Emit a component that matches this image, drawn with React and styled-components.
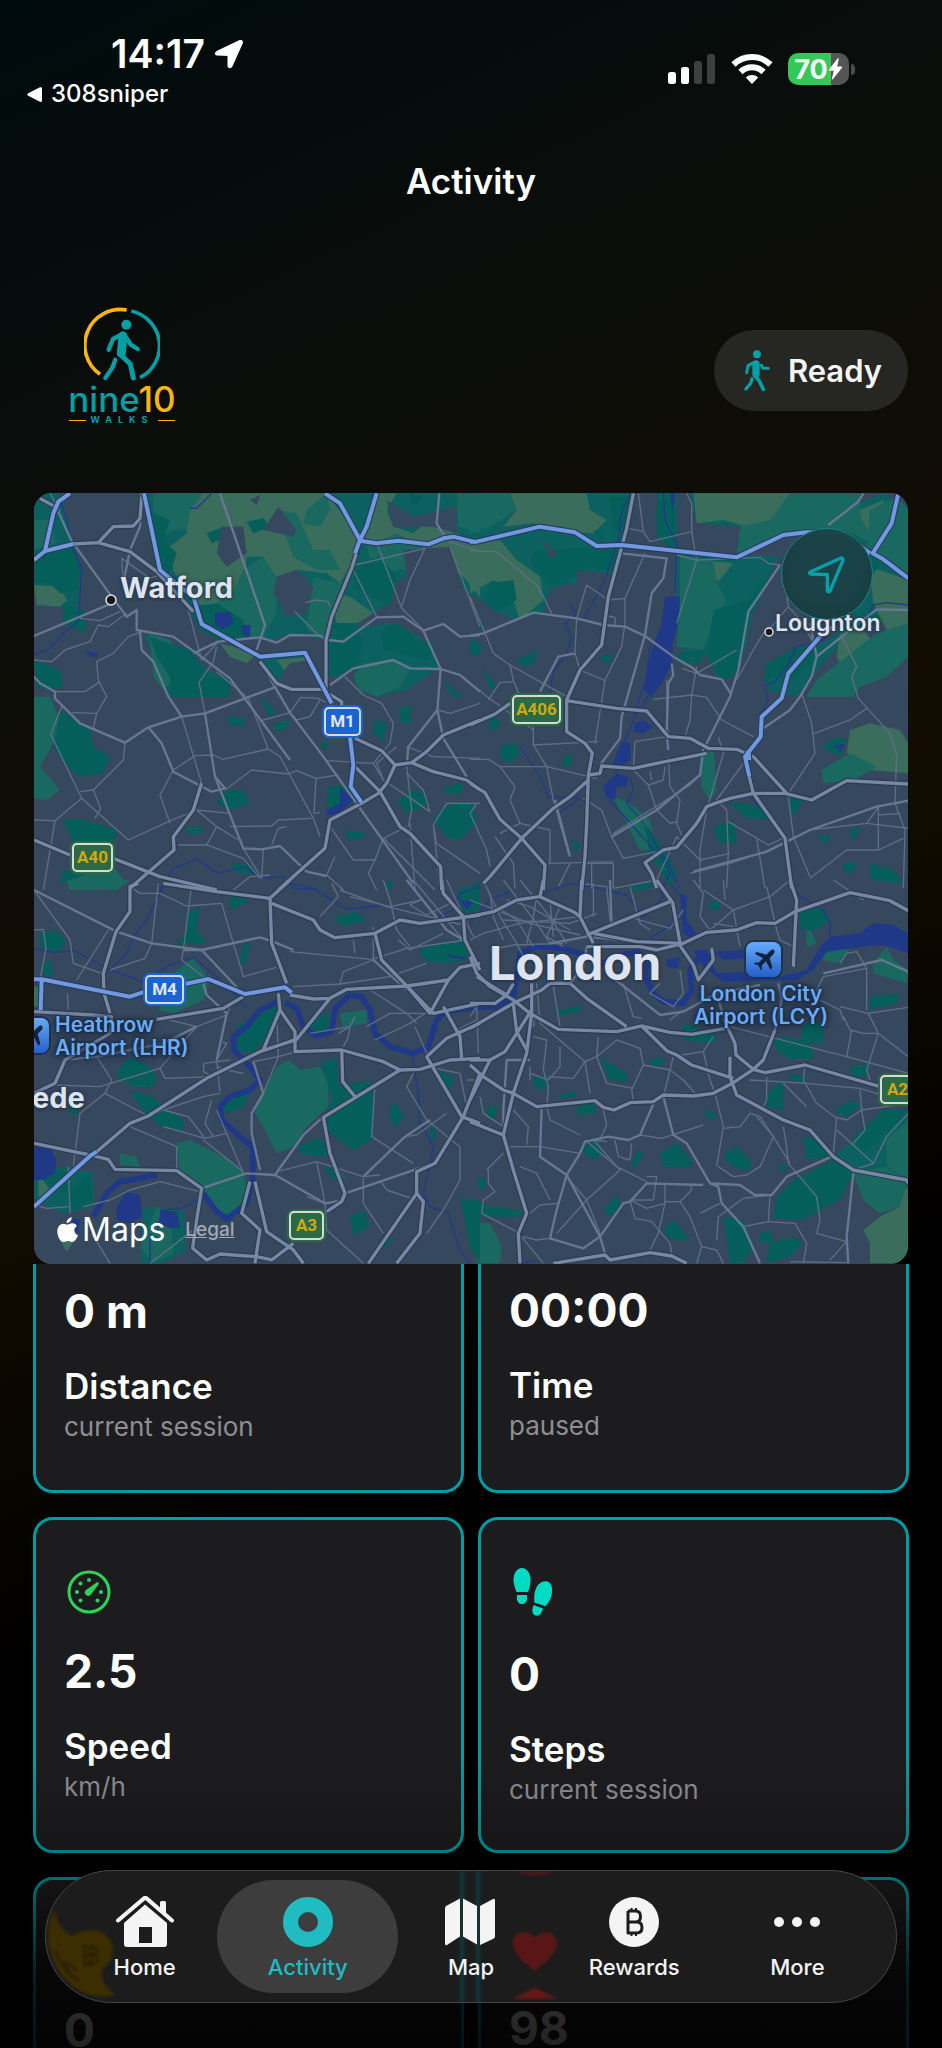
import { useLayoutEffect, useRef } from "react";
import styled, { createGlobalStyle } from "styled-components";

// Map geometry is split in four tiles, three units to a pixel.
const tiles = [
  {
    x: -4,
    y: -3,
    wood: [
      "350,10 1350,10 1350,400 1290,340 1200,300 1110,260 1060,350 960,400 940,560 890,560 880,450 800,430 720,450 640,450 570,450 500,390 430,300 385,240 350,100",
      "12,10 90,10 130,160 155,235 145,350 60,350 12,280",
      "690,500 830,495 860,560 800,560 760,560 730,590",
      "960,410 1100,400 1210,470 1230,530 1130,600 1040,620 980,580",
      "340,430 480,490 540,545 600,570 600,620 420,620 380,520",
    ],
    olive: [
      "480,10 890,10 985,140 960,230 930,280 890,250 800,240 735,262 700,200 650,200 640,300 600,340 520,375 470,310 430,240 420,170 470,130",
      "1040,10 1100,10 1070,60 1090,110 1150,130 1210,80 1280,130 1350,160 1350,320 1290,250 1180,280 1100,220 1020,200 1000,120",
      "12,285 90,290 110,330 90,350 20,345",
      "900,310 960,320 1030,370 980,400 920,400",
      "570,460 680,490 650,520 600,500",
      "740,510 830,500 820,540 770,550",
    ],
    teal: [
      "830,60 890,10 900,60 870,110 820,100",
      "640,240 700,200 740,262 740,370 700,440 640,440 600,380 560,340 610,300",
      "1010,170 1100,130 1180,170 1170,230 1100,240 1050,250",
      "970,560 1000,520 1100,510 1135,545 1110,590 1040,620 990,600",
      "740,60 800,70 850,180 900,180 930,240 860,240 790,200",
      "360,430 420,450 460,510 440,560 400,600 370,560",
      "12,620 60,620 90,690 70,760 30,830 90,900 50,930 12,925",
      "1280,10 1350,10 1350,130 1285,110",
      "100,1150 250,1130 280,1170 230,1200 120,1200",
      "370,10 520,10 480,60 470,120 420,120 370,180",
      "12,90 60,90 80,160 12,180",
      "850,260 930,280 950,240 900,380 880,440 830,420",
    ],
    park: [
      "350,60 420,90 400,150 440,190 420,250 380,230 360,150",
      "12,180 130,170 155,230 140,300 90,310 60,280 12,280",
      "470,350 560,340 640,390 650,450 570,450 510,420",
      "360,440 480,480 540,560 600,570 600,620 420,620 420,560 380,500",
      "90,660 180,720 190,770 240,800 220,850 150,860 110,830 70,770",
      "12,510 90,540 100,590 60,600 20,590",
      "100,990 160,990 260,1020 250,1060 130,1060",
      "100,340 160,360 170,430 100,400",
      "970,230 1050,200 1100,260 1080,350 1030,320 970,290",
      "1050,420 1100,400 1160,450 1210,460 1200,510 1140,500 1060,480",
      "890,400 980,400 1000,460 970,540 900,560",
      "1230,960 1270,940 1330,940 1340,1000 1290,1050 1250,1040 1210,990",
      "895,890 950,885 970,930 910,960 890,950",
      "590,900 640,900 660,940 600,960 560,940",
      "1110,650 1145,650 1140,700 1110,700",
      "1030,690 1070,700 1060,755 1030,730",
      "1100,930 1150,900 1185,910 1190,950 1130,970",
      "460,1010 520,1010 510,1030 480,1035",
      "590,680 645,685 640,710 600,705",
      "690,620 735,660 720,685",
      "870,750 900,765 880,780",
      "1235,570 1300,620 1270,620",
      "1140,10 1180,20 1150,50",
      "730,700 780,690 770,715 740,725",
      "950,1020 1005,1030 990,1050 950,1045",
      "1240,890 1300,880 1290,915 1250,910",
      "600,1120 650,1120 690,1150 620,1150",
      "100,1140 180,1150 90,1180",
      "530,130 580,110 570,150 545,160",
      "650,95 700,85 720,110 670,130",
    ],
    land: [
      "575,110 640,110 650,190 590,230 560,190",
      "700,120 745,50 800,120 790,140",
      "1070,30 1150,80 1280,50 1280,130 1210,110 1090,110",
      "740,260 800,240 850,290 830,370 770,380 730,310",
      "100,60 330,60 330,240 200,180",
      "770,250 830,260 840,300 780,300",
      "660,30 690,15 680,45",
      "1120,180 1260,170 1300,300 1350,330 1350,420 1180,430 1110,370 1130,260",
      "780,520 840,510 870,590 790,590 750,560",
    ],
    water: [
      "555,370 600,365 610,400 580,418 555,405",
      "635,405 662,405 658,445 635,430",
      "168,482 205,490 200,502 180,498",
      "930,890 970,930 920,975 890,975 890,960 930,940",
    ],
    river: [
      "90,30 110,90 125,165 155,235 145,395 100,430 60,475 12,495",
      "545,10 500,55 480,55",
      "390,1200 430,1135 500,1108 565,1150 645,1130 690,1165 760,1160 790,1195 860,1198",
    ],
    minor: [
      "150,385 210,392 270,365",
      "12,510 65,515 105,480 180,455 205,405 235,410 290,370",
      "335,425 295,440 250,490 200,515 205,570 230,620 200,670 125,668",
      "75,605 165,605 210,575",
      "95,650 62,732 155,925 295,1050 415,995 500,960 600,970",
      "12,990 75,992 155,925",
      "75,992 40,1200",
      "200,670 190,715 285,760 280,810 190,900 150,905",
      "190,900 212,955 195,985",
      "455,680 515,880",
      "430,840 495,797 550,795 578,808 715,777 655,625 560,545",
      "430,840 390,915 420,1000",
      "475,360 515,510 565,455 690,442",
      "560,470 550,515 507,578 525,670",
      "690,693 780,668 812,622 865,625 890,638",
      "715,777 750,800 850,985 870,1040",
      "585,900 665,840 775,852 800,842 858,865 925,855",
      "858,865 852,970 870,968",
      "600,1010 725,1008 745,990 845,985",
      "725,1065 745,1015 770,1010",
      "500,960 560,1010 625,1050",
      "560,1010 530,1065 445,1065",
      "530,1065 640,1105 690,1165",
      "640,1075 695,1165 700,1080",
      "900,1010 970,1110 1035,1110 1060,1045 1130,1010",
      "915,1100 890,1155 940,1200",
      "1035,1110 1015,1150 1040,1200",
      "1060,1045 1215,1200",
      "890,812 1030,820 1080,760 1090,700 1055,640 1000,615 945,560",
      "1130,770 1210,800 1350,805",
      "1030,820 1060,870 1200,965 1180,900 1130,850",
      "1210,1005 1250,940 1350,940",
      "1210,1005 1220,1060 1350,1150",
      "1225,660 1260,670 1350,640",
      "970,240 1040,380",
      "1040,160 1115,355 1180,420",
      "975,225 1185,175 1140,270 1115,350",
      "1255,155 1350,185",
      "1260,170 1350,410",
      "795,365 870,440",
      "825,338 860,330 895,335 900,350",
      "275,205 360,265 400,250",
      "275,205 280,280",
      "90,65 60,10",
      "1230,1200 1215,1050 1210,1005",
      "1130,830 1145,960 1135,1010",
      "1140,1000 1155,1200",
      "610,1200 660,1160 720,1155",
      "780,668 800,690 840,680 870,630",
      "1060,870 1040,820 1100,770",
    ],
    mid: [
      "130,160 245,320 290,380 320,360 320,420 430,440 500,490",
      "12,438 245,340",
      "85,65 130,165",
      "280,280 300,180 330,110 335,10",
      "330,425 335,480 370,515 415,620 455,680",
      "455,680 525,670 740,590",
      "12,560 30,580 75,605 75,625 150,700 285,758 355,712 455,680",
      "355,712 395,760 430,845 545,905 585,895 555,860",
      "525,670 555,860 640,1075 695,1078 750,1068 830,1145 890,1158",
      "500,490 600,565 780,810",
      "570,10 705,405 680,480",
      "490,490 565,455 690,442 740,458 780,435 870,437 895,450 940,455 1040,382 1120,380 1180,422 1240,402 1290,440 1350,435",
      "690,515 780,668 880,800 1150,1180",
      "1180,422 1232,537 1222,660 1135,770 1130,830",
      "1232,537 1290,555 1350,605",
      "1222,660 1240,745 1310,860",
      "900,585 970,535 1090,510 1140,535 1232,537",
      "1228,10 1220,100 1250,150",
    ],
    major: [
      "30,25 75,50",
      "130,162 205,158 300,185 380,245 490,365",
      "205,158 250,110 310,108 330,85 335,20",
      "690,515 740,580 785,598 875,598 935,635 935,660",
      "990,155 965,235 905,380 888,450 888,600",
      "12,1050 120,1095",
      "250,1105 390,1160 560,1200",
      "515,880 490,960 430,1040 432,1080 300,1195",
      "975,745 1055,782 1095,825 1070,880 1045,910 995,940 900,990 885,1075 745,1200",
      "975,830 1050,905 1110,1010 1140,1030 1232,1130 1235,1200",
      "1095,825 1145,818 1190,785 1240,735 1350,690",
      "1145,818 1210,845 1310,870 1350,900",
    ],
    motorway: [
      "12,210 45,183 130,162",
      "45,183 70,70 85,35 120,10",
      "342,10 390,240 450,290 490,320 515,402 690,500 825,488 905,640",
      "960,740 970,825 962,890 995,938",
      "885,10 930,40 990,150 1010,110 1040,10",
      "990,150 975,190",
      "990,152 1040,160 1105,152 1195,163 1240,145 1270,140 1330,155",
    ],
  },
  {
    x: 436,
    y: -3,
    wood: [
      "0,10 480,10 450,170 440,250 340,290 290,280 240,300 220,370 130,390 60,350 0,300",
      "560,10 620,10 620,180 600,180",
      "620,180 930,200 900,270 850,360 820,500 780,560 740,570 720,500 640,490 620,420",
      "1120,60 1240,10 1315,60 1315,420 1250,400 1180,400 1060,520 980,620 890,600 900,530 960,480 1060,460 1150,390",
      "660,10 960,10 1160,10 1040,110 930,140 840,190 800,190 810,110 680,100",
    ],
    olive: [
      "120,10 350,10 360,60 410,90 370,130 270,125 190,100 100,110 140,60",
      "670,10 960,10 990,80 900,90 830,110 760,90 680,100",
      "0,160 90,150 140,210 210,260 220,330 150,390 120,300 70,270 0,310",
      "1170,60 1240,30 1260,90 1210,150 1175,110",
      "1200,230 1315,270 1315,400 1250,420 1210,340",
      "1110,430 1180,420 1230,480 1200,580 1140,570 1100,500",
      "1140,720 1200,700 1290,720 1315,760 1315,850 1200,840 1130,790",
      "700,210 790,220 745,275",
    ],
    teal: [
      "0,10 120,10 140,60 60,110 0,130",
      "960,10 1170,10 1170,80 1220,170 1150,130 1040,120 940,140 840,190 800,190 810,110 900,90",
      "630,200 730,210 740,280 770,330 720,420 700,480 620,470 630,330",
      "1220,430 1315,400 1315,500 1250,560 1170,590 1150,620 1010,620 1040,570",
      "1055,840 1140,790 1220,830 1150,870 1060,880",
      "690,800 730,770 740,900 720,930 695,890",
      "430,920 480,940 540,990 560,1080 510,1080",
      "1200,60 1280,20 1315,60 1315,270 1230,210 1190,180",
    ],
    park: [
      "200,180 440,170 450,250 350,230 270,290 230,280 180,210",
      "420,20 490,20 470,110 430,130",
      "60,280 130,270 140,330 80,370 40,330",
      "560,30 610,30 620,180 560,150",
      "730,360 840,330 870,280 920,250 870,340 820,400 820,500 790,560 750,570 710,500",
      "890,520 980,470 1040,470 1040,500 970,570 910,560 880,580",
      "730,1010 790,990 800,1060 750,1060",
      "90,770 130,755 150,790 120,820 90,800",
      "140,510 200,480 195,520 160,530",
      "0,440 40,470 20,500 0,490",
      "35,530 80,590 60,600",
      "770,930 870,950 900,990 830,985",
      "500,490 540,480 540,550 510,560",
      "520,1000 590,1090 620,1150 600,1190 540,1090",
      "390,500 420,490 425,515 400,518",
      "280,800 310,790 300,830 280,830",
      "1120,1120 1160,1115 1150,1150 1120,1145",
      "1200,1120 1270,1140 1300,1180 1200,1170",
      "950,920 1000,930 970,980",
      "1150,130 1180,160 1230,220 1200,270 1120,210",
      "1140,1020 1170,1010 1160,1040 1140,1045",
      "620,490 710,480 690,520 630,520",
      "300,1050 330,1060 320,1090",
      "1050,1035 1080,1035 1075,1060 1050,1055",
      "20,390 40,400 30,420",
      "370,120 400,125 390,150",
      "60,680 90,690 80,720 55,715",
      "1055,770 1100,740 1130,750 1110,800",
    ],
    land: [
      "450,180 600,180 590,560 420,560",
      "680,110 720,110 740,130 810,110 800,190 700,190",
      "215,150 265,190 240,205",
      "320,240 420,250 410,400 320,390",
      "920,210 960,320 940,410 870,450 830,480 860,350",
    ],
    water: [
      "585,320 630,318 625,400 608,460 608,520 575,580 545,620 520,600 545,480 575,400",
      "495,700 520,690 550,710 520,730 490,725",
      "455,755 480,760 482,810 450,830 430,820",
      "400,890 440,850 475,860 470,890 440,890 435,930 410,920",
      "600,10 615,10 608,60",
      "1095,765 1125,762 1110,785",
    ],
    river: [
      "580,10 585,90 620,160 615,310",
      "480,10 450,80 450,130 405,270 340,390",
      "600,520 520,640 490,690 480,720 430,820 440,850",
      "540,460 530,560 490,680",
      "300,345 320,370 285,400 305,440 290,490 250,545 240,610",
      "400,890 420,930 560,1090 590,1110 630,1195",
      "480,860 490,900 470,940 520,1000",
      "535,1015 600,1150 580,1190",
      "1100,395 1060,450 980,470 950,530 915,575 885,590 895,630 875,670",
      "150,770 210,860 235,920 330,925 265,970",
      "840,920 940,1030 965,1140 960,1190",
      "1315,345 1250,338 1210,345 1190,385 1150,390",
    ],
    minor: [
      "505,10 520,125 540,155 665,125",
      "650,10 665,40 665,125 680,210",
      "475,115 520,125",
      "680,210 870,202 895,220 930,225",
      "620,195 680,210",
      "680,210 620,400",
      "350,285 415,330 465,325 525,190",
      "465,325 465,400 455,470 405,570 375,760",
      "350,285 320,385 315,490 330,540 405,572",
      "415,378 435,382 435,405",
      "0,320 70,490 120,525 290,620",
      "0,580 65,630 190,720",
      "190,705 190,765 230,830 250,930 295,1090",
      "190,765 385,755",
      "90,830 230,830 380,865",
      "0,808 55,808 90,830 135,890 120,930 150,1000",
      "120,525 130,570 150,620",
      "130,575 90,578 55,630",
      "550,628 665,615 710,622 755,690 850,740",
      "680,530 665,615 660,690 645,740",
      "590,570 590,680 595,740",
      "495,755 590,740",
      "495,755 490,840 535,885 560,960 600,1000 620,995",
      "535,885 580,870 585,830",
      "540,845 545,870",
      "595,800 600,890 630,930 620,1000 635,1035",
      "745,740 760,790 710,960 690,1080 690,1195",
      "430,1030 660,885 690,855",
      "340,925 395,960 425,1040 460,1105 560,1085",
      "820,820 740,930 770,960 775,1090 770,1195",
      "775,995 895,1065 950,1040",
      "860,1045 885,1195",
      "1115,440 1160,530 1145,560 1165,625 1260,730 1280,795 1275,940 1305,1020 1300,1195",
      "1190,655 1140,690 1030,732",
      "995,610 1025,700 1035,790 955,910",
      "955,920 970,1040 1020,1160",
      "1015,1020 1190,1000 1230,945",
      "1225,945 1225,1080 1130,1080 1020,1165",
      "1190,1000 1315,1015",
      "1225,975 1290,970",
      "1225,1080 1300,1045",
      "950,320 955,350 1000,400 1030,460",
      "955,350 905,410 880,430 850,480 800,570",
      "235,1120 430,1115",
      "240,1120 240,1020 150,1000 90,1030",
      "75,1040 130,1120 135,1195",
      "20,940 0,970 50,1080 60,1130",
      "265,1190 300,1120",
      "340,1120 430,1120 430,1195",
      "365,1120 365,1195",
      "430,1195 560,1170 620,1040 690,1110 780,1090",
      "0,182 80,185 205,290 245,370",
      "635,535 680,550 800,480",
      "660,1150 780,1120 900,1080",
    ],
    mid: [
      "0,438 40,430 190,368 320,385 400,405 465,410 525,438 610,500 670,535 690,555 755,568 785,615",
      "455,190 590,205 580,265 545,310 525,435 455,680 450,745 390,825",
      "315,490 265,500 210,605",
      "605,520 610,555 595,580 590,730 595,780",
      "1180,10 1165,35 1075,105",
      "930,225 835,365 805,540 780,620 700,780 690,855 615,915",
      "1315,360 1220,358 1165,400 1040,500 1025,560 990,620 960,660 880,715",
      "1315,932 1220,950 1020,1020 890,1085 670,1145",
      "1020,400 1040,500",
      "255,930 300,1100",
      "425,1040 560,960 615,915",
    ],
    major: [
      "490,10 470,115 415,320 395,465 330,540 290,630 290,725 345,760 367,790 355,855 350,1000 345,1100 335,1200",
      "120,640 75,672 0,705",
      "290,632 440,655 530,663 595,740 660,745 715,775 800,778 850,800 950,910",
      "355,855 390,850 395,828 490,835 560,820 710,790",
      "355,870 300,920 250,955 155,1045 60,1160 40,1180",
      "0,880 45,908 90,988 155,1045 225,1125 220,1200",
      "850,910 780,925 735,940 710,950 680,1000 620,1072 580,1080 525,1118 545,1150 560,1195",
      "850,910 945,910 1025,930 1130,872 1315,882",
      "835,850 850,910 945,1045 965,1195",
    ],
    motorway: [
      "0,155 20,155 210,110 315,127 380,168 455,165 800,202 940,135 1010,127 1120,130 1200,190",
      "1285,10 1265,100 1208,190 1240,208 1315,265",
      "1085,410 1050,440 955,550 935,625 875,680 872,740 825,800 838,860",
      "835,780 838,810",
    ],
  },
  {
    x: -4,
    y: 387,
    wood: [
      "12,870 100,860 190,880 190,980 100,1000 12,960",
      "340,980 460,990 470,1110 400,1150 330,1150",
      "540,920 640,880 665,960 600,1020 550,980",
    ],
    olive: ["25,900 90,900 60,940 25,950", "90,1080 140,1070 110,1115", "12,320 25,320 25,380 12,380"],
    teal: [
      "740,560 775,540 810,570 870,560 895,610 895,680 830,740 790,800 740,820 700,740 675,700 690,650",
      "440,790 480,780 540,810 600,840 640,880 600,930 555,1000 520,930 450,880",
      "440,270 490,235 540,300 520,360 430,400 385,390 420,340",
      "590,910 640,890 660,940 620,1010 560,990 555,950",
      "165,0 300,0 260,30 200,25",
      "380,980 420,1000 430,1120 370,1150 330,1100",
      "270,820 320,830 330,860 270,855",
      "930,400 1010,390 1010,430 940,440",
      "930,870 920,880 950,900",
    ],
    park: [
      "870,550 920,530 925,640 900,650 890,600",
      "920,620 1020,600 1030,660 1025,780 970,810 900,760 885,710",
      "620,480 620,440 700,390 750,380 720,460 670,520 620,510",
      "470,100 510,80 500,150 530,190 440,195 470,150",
      "360,560 300,530 270,560 260,590 310,620 370,620 380,590",
      "300,630 370,650 400,680 460,720 460,760 400,740 350,710",
      "600,50 650,40 650,70 600,90",
      "640,190 660,190 650,250 630,250",
      "1165,210 1230,190 1310,180 1310,240 1260,250 1190,245",
      "1280,30 1350,10 1350,90 1300,100",
      "30,160 80,150 110,190 80,215 30,200",
      "910,110 980,95 1010,120 940,140",
      "12,860 100,870 130,920 180,880 190,980 130,990 110,940 60,930",
      "840,410 900,400 890,460 830,465",
      "1080,680 1100,670 1120,710 1100,740 1080,720",
      "960,1010 1000,990 1020,1040 970,1065",
      "1290,950 1350,980 1350,1150 1320,1100 1300,1000",
      "570,670 620,630 660,640 640,680 590,700",
      "510,920 560,990 590,1010 560,1010",
      "800,800 870,770 900,830 820,825",
      "1220,570 1270,590 1260,630 1220,600",
      "1060,1060 1090,1080 1060,1110",
      "40,250 60,240 70,290 40,290",
      "880,860 920,870 940,920 900,890",
      "1065,10 1090,0 1080,35",
      "1210,730 1220,780 1195,770",
      "110,680 150,690 130,710",
    ],
    land: ["300,0 370,30 360,0", "480,890 520,940 500,990 470,920"],
    water: [
      "12,800 60,805 80,840 75,880 40,900 12,900",
      "290,935 330,945 335,1010 300,1030 260,1020 260,980",
      "390,990 440,995 450,1040 420,1045 390,1030",
      "130,1010 150,1020 145,1060 120,1040",
      "1255,225 1310,232 1300,238 1255,232",
      "1290,60 1330,65 1310,90",
    ],
    river: [
      "12,205 70,218 130,210 240,270 340,305 420,255 490,232 560,290 620,350 650,385",
      "405,10 370,80 350,120 310,170 290,220 240,270",
      "780,10 850,25 950,88 1060,75 1100,90",
      "500,960 455,985 395,990 380,1060",
      "1145,520 1165,640 1170,730 1210,800 1180,940 1200,980 1255,1000 1290,1110 1320,1150",
      "360,1150 360,1060",
      "1350,20 1290,40 1270,90 1200,120",
    ],
    thames: [
      "745,365 690,390 650,440 610,470 612,510 660,560 690,600 660,630 600,650 570,680 575,720 630,770 668,800 668,900 650,970 590,1018 555,990 520,940",
      "765,368 800,385 820,440 860,468 905,455 915,385 960,345 995,350 1020,390 1035,460 1080,500 1150,520 1195,500 1220,420 1245,395 1350,380",
      "190,1010 230,940 270,905 330,895 380,885",
    ],
    minor: [
      "12,30 120,180 130,250 215,280",
      "12,150 40,148 48,205 30,300",
      "235,150 140,300",
      "385,10 365,190",
      "300,20 330,40 390,40 470,78 575,70 610,190 640,290 740,262",
      "485,15 460,210 455,240 520,290",
      "365,190 345,235 240,270",
      "115,390 112,340",
      "380,410 500,440 590,405 600,380",
      "500,440 390,565 210,620 75,615",
      "200,530 245,600 225,640 150,700 130,860",
      "390,565 405,595 550,590",
      "560,560 590,570 640,580",
      "550,590 520,575 522,550 600,540",
      "575,485 590,490 560,540 570,635",
      "400,690 520,650 570,640",
      "225,640 320,690 360,710 400,690 475,710 525,775",
      "300,740 440,800 440,870",
      "400,740 525,775 590,760",
      "545,660 525,730 550,770",
      "520,780 640,875",
      "560,690 640,880",
      "740,875 860,845 885,970 830,950",
      "860,845 1000,890 1050,885",
      "885,970 890,1050 1000,1150",
      "740,400 745,530 700,640",
      "670,545 745,530 800,515",
      "840,460 960,440 955,470 940,500",
      "975,410 960,440 925,460",
      "1035,610 1025,770 1150,850",
      "1000,895 1000,970 1060,1060",
      "1050,900 1070,930 1160,960",
      "1125,770 1160,765 1250,700",
      "1150,580 1130,620 1190,720 1290,800 1290,900 1240,990 1190,1060",
      "780,215 1025,238 1130,205 1310,180",
      "790,320 930,312 1080,290 1190,250",
      "930,310 940,275 1030,240 1030,140",
      "970,180 975,220",
      "905,10 925,50 870,110",
      "930,30 1070,80 1300,135",
      "960,50 1080,80 1175,60",
      "1060,0 1080,60 1100,150 1140,200",
      "1105,180 1140,210 1240,160",
      "1020,330 1130,400 1160,430",
      "1035,480 1140,430 1200,390",
      "1010,440 1080,400 1180,400",
      "1155,440 1190,520",
      "1280,450 1340,420",
      "12,975 50,985 115,980",
      "115,860 120,1000",
      "160,980 240,960 300,930 390,905 510,935",
      "185,1060 240,1150",
      "490,1050 360,1150",
      "1190,560 1290,580 1310,680",
      "1350,600 1310,600",
      "1250,0 1330,170",
      "1150,0 1300,180",
      "1170,60 1140,75 1190,105 1260,70",
    ],
    mid: [
      "12,30 260,155 365,190 515,210 690,172 730,185 790,210",
      "460,210 515,210 600,300 640,345",
      "100,540 200,530 400,490 500,440",
      "515,925 650,880 735,885 820,765 880,710",
      "735,885 885,970 945,960",
      "700,640 665,700 665,760 690,870",
      "670,545 700,640",
      "945,940 1050,905 1210,850",
      "520,310 530,345 590,400 560,540",
      "1130,0 1250,150 1300,180",
      "1030,240 1130,330",
      "1000,890 1125,770 1200,720",
    ],
    major: [
      "325,10 300,20 300,95 258,155 220,280 222,340 240,400",
      "12,395 190,405 245,410 240,460 105,540 75,610 12,640",
      "400,10 560,35 720,55 780,0",
      "720,55 725,190 770,310",
      "725,70 850,120 870,150 915,173 1035,160 1110,120 1170,130 1350,105",
      "1035,160 1055,240 1210,400 1350,370",
      "780,345 850,357 900,355 950,328 1130,318 1255,300 1290,262 1350,250",
      "380,418 580,385 640,350",
      "745,340 750,390 795,455 795,515 935,510 1060,545 1110,570 1170,568 1260,540 1350,535",
      "900,355 800,478 690,515 600,560 530,595 355,708 300,730 200,815",
      "750,390 700,510",
      "935,510 938,605 975,650",
      "1110,570 880,712 900,820 945,940 935,965 890,995",
      "12,790 180,825 235,838 255,868 440,872 515,925 500,1020 488,1105 530,1140 570,1122 680,1130 725,1140 790,1090",
      "675,905 710,1055 790,1110 820,1150",
      "660,905 635,1000 690,1050 675,1150",
      "1130,318 1200,400 1255,300",
      "1240,380 1290,470 1295,535",
      "1350,430 1250,475 1190,530 1295,710 1350,730",
      "1350,580 1300,710 1215,850 1160,875 1160,940 1180,965 1170,1060 1100,1150",
      "1160,940 1015,1150",
      "1235,0 1240,40 1300,110 1305,180 1350,270",
    ],
    motorway: [
      "12,298 35,298 300,350 345,335",
      "35,298 32,390",
      "465,312 535,297 645,342 765,322 785,338",
      "12,980 180,828 200,815",
    ],
  },
  {
    x: 436,
    y: 387,
    wood: ["1150,780 1315,690 1315,910 1250,880 1150,870 1090,830"],
    olive: ["1290,900 1315,930 1315,1150 1200,1150 1200,1090 1180,1050 1230,1010 1290,980"],
    teal: [
      "1150,880 1240,860 1315,900 1290,980 1230,1000 1180,960",
      "1250,780 1315,720 1315,900 1250,860",
      "20,1030 60,1030 95,1100 90,1150 20,1150",
      "1060,210 1140,205 1110,250 1060,240",
      "1210,250 1250,200 1270,240 1315,270 1310,310 1210,280",
      "1010,130 1040,190 1010,200",
    ],
    park: [
      "910,480 960,470 1030,500 1025,540 960,540 920,510",
      "1000,430 1060,430 1060,490 990,490",
      "1030,870 1110,830 1150,880 1110,960 1070,980 1000,1020 910,1020 920,950 970,900",
      "570,820 620,790 660,830 665,860 580,860",
      "765,820 800,800 840,840 840,870 800,865 765,840",
      "390,530 470,580 470,605 420,600",
      "400,990 440,945 455,980 420,1010",
      "330,810 370,780 400,820 370,840",
      "320,680 370,670 380,700 320,705",
      "890,640 940,600 940,690 890,680",
      "990,90 1060,85 1080,120 1040,150 990,150",
      "760,1010 820,1020 850,1100 820,1150 780,1150",
      "640,430 740,460 730,490 640,480",
      "260,390 340,375 330,395 270,405",
      "1200,350 1290,340 1280,370 1200,390",
      "900,1090 970,1070 1000,1090 960,1130 890,1150",
      "580,1050 610,1020 660,1080 600,1080",
      "1150,770 1240,690 1315,690 1250,760 1180,820",
      "190,590 230,590 225,630 195,625",
      "870,1060 900,1050 910,1090 870,1085",
      "480,20 560,0 550,20 490,35",
      "0,950 60,980 160,990 150,1010 60,1010 0,1000",
      "1000,770 1060,780 1090,830 1010,840",
      "1140,560 1200,550 1190,590 1140,590",
      "50,680 85,680 70,720 50,710",
      "700,690 740,700 720,725",
      "720,65 750,60 750,90 720,85",
      "500,810 520,820 495,870 485,850",
      "25,890 50,900 45,930 25,920",
      "1090,690 1150,660 1170,680 1130,710",
      "540,540 580,530 575,560 545,555",
      "0,30 30,10 30,60 0,80",
      "260,650 320,630 310,655",
      "960,580 1010,590 1000,605 960,600",
      "920,860 950,850 945,880",
    ],
    land: ["1060,330 1110,320 1090,370", "1070,280 1200,265 1200,300 1060,320"],
    water: [
      "730,215 830,210 830,235 760,240",
      "670,210 710,210 740,280 830,275 930,290 1010,270 1050,200 1080,170 1170,160 1210,130 1270,135 1315,160 1315,220 1240,195 1180,200 1070,215 1030,270 980,300 760,305 700,260",
      "590,240 630,230 625,265 590,260",
      "630,40 650,50 648,120 680,160 670,180 640,160",
    ],
    river: [
      "0,130 60,60 130,30",
      "220,40 300,10 360,20 470,45 500,80 520,130",
      "540,175 640,110",
      "600,10 630,45",
      "960,10 990,50 1060,90 1080,130 1080,170",
      "560,0 580,50 520,110",
      "150,1150 200,1140",
    ],
    thames: ["0,382 90,380 130,350 145,260 150,220 200,200 280,205 330,220 400,250 460,225 500,215 530,240 525,290 550,340 580,365 640,370 665,330 660,270 690,225 720,230"],
    minor: [
      "0,180 40,160 150,130 240,120 330,110",
      "40,0 90,110 140,190 160,230",
      "100,0 200,130 240,190",
      "150,0 240,110 290,190",
      "60,40 70,110 100,180",
      "0,60 180,130 330,165",
      "100,120 300,130 380,100",
      "60,210 130,195 280,190",
      "200,50 190,110 170,190",
      "240,60 250,170",
      "270,80 230,170 280,200",
      "110,60 180,80 300,150",
      "80,80 140,120 190,200",
      "330,10 410,20 420,120",
      "370,10 370,110",
      "480,20 510,130 540,150",
      "470,110 600,145 640,90",
      "670,0 700,40 690,110 720,150 790,90 900,50 960,0",
      "700,30 790,90 810,200",
      "760,0 765,60",
      "890,20 920,150 930,180 970,200",
      "730,130 790,140",
      "1090,0 1180,60",
      "1110,250 1130,220 1160,215 1190,265",
      "1060,290 1190,265 1190,390",
      "1060,290 1030,350 1110,390 1120,420",
      "1110,380 1195,400 1315,382",
      "1195,400 1225,460 1180,460 1140,450 1120,410",
      "1145,450 1130,530",
      "1225,460 1315,530",
      "1225,460 1190,570 1200,600",
      "780,440 1130,530 1315,580",
      "0,410 20,380 25,520",
      "200,310 210,430 280,490 345,545 360,640",
      "250,320 270,440",
      "190,470 230,480 220,570 235,620 230,680",
      "270,500 270,560 235,600 180,580",
      "235,590 310,595 345,545 380,530 440,480 510,505 520,555 485,630 490,660",
      "385,470 380,530 410,610 490,625",
      "520,555 600,570 640,600 680,645",
      "610,530 600,570 580,650",
      "635,525 700,515 730,470",
      "700,515 720,600 735,640 760,740 740,860",
      "890,590 890,660 880,680",
      "840,600 1010,610 1170,625 1250,650",
      "1005,560 1000,600 1040,670 1100,715 1090,820",
      "1170,630 1175,690 1130,720 1100,712",
      "1175,690 1315,670",
      "1175,690 1185,750 1150,790",
      "940,610 1010,680",
      "510,765 575,775 700,735",
      "760,745 810,740 840,700 870,710 910,770 960,850",
      "860,710 910,770 870,860 830,885 790,890 745,860",
      "940,740 950,800 955,850 1040,950 1050,1020 1040,1060 1130,1085",
      "345,780 440,860 530,905",
      "400,690 410,735 390,780",
      "435,780 445,830 480,840 485,790",
      "370,780 450,870 350,960 260,1060",
      "120,800 210,800 330,820",
      "230,680 240,720 330,765",
      "130,690 175,740 170,795",
      "50,870 100,820",
      "55,870 55,910 75,935 40,960 35,1000 140,1055",
      "290,890 350,960 390,1060",
      "240,1075 200,1080 160,1070",
      "265,970 210,975 180,1000",
      "150,860 200,880 240,960",
      "480,960 495,1015 545,1025 600,1090 605,1120",
      "530,890 560,890 550,960 490,960",
      "585,970 530,985 480,960",
      "585,910 585,970 565,1060 540,1110",
      "630,965 665,930 660,910",
      "630,965 660,1010 695,1100 680,1150",
      "585,965 630,965",
      "695,1100 740,1110 760,1150",
      "750,970 690,1000",
      "740,1080 745,1010 820,955 900,945",
      "900,950 895,1025 820,1040",
      "895,1025 975,1030 1010,1090 1000,1150",
      "1130,1085 1080,1140",
      "960,1145 1130,1148",
      "1315,700 1250,770 1210,850 1150,870",
      "1100,750 1210,850",
      "570,310 540,340 610,380 640,340 630,270",
      "460,310 490,410 515,415",
      "600,420 640,390",
      "155,1070 220,1150",
      "370,780 410,785",
      "180,560 180,600",
      "30,650 40,700 100,740",
    ],
    mid: [
      "240,190 350,170 500,185",
      "300,310 340,260 350,200",
      "190,310 190,440",
      "570,405 450,310 420,290",
      "570,405 640,395 740,340 870,315",
      "1060,280 1235,240 1315,275",
      "100,740 100,690 110,540 180,540",
      "215,680 210,830 290,885 390,1070 405,1120",
      "330,820 345,785 415,770 475,780 510,765 555,660",
      "580,650 610,765 650,790 720,910",
      "330,820 290,885 260,990 240,1075 340,1105 390,1070 460,970 480,965 530,910 700,915",
      "720,910 745,920 755,970 820,1040 870,1150",
      "720,910 810,915 855,945 905,945 950,890 1085,830",
      "1150,880 1130,1070 1135,1150",
      "740,340 760,410",
      "925,310 935,360 915,450",
      "420,0 425,140",
    ],
    major: [
      "335,0 330,110 370,190",
      "220,0 210,50 310,95 330,110",
      "0,110 70,95 140,60 210,50",
      "350,165 600,65",
      "370,160 500,185 640,190 710,157 800,150 860,128 915,130 975,95 1140,38 1260,62 1315,92",
      "350,200 510,200 560,210 640,190",
      "560,0 608,68 632,200 670,255 685,300 730,240 725,205",
      "960,0 980,60 970,260",
      "0,230 20,280 60,320 130,360 180,400 265,448 440,455 515,438 600,457 665,463 765,445",
      "300,310 350,355 470,440",
      "515,438 590,512 620,525 665,555 790,595",
      "20,290 110,345",
      "0,445 130,370 215,330 240,310",
      "0,370 75,370 110,345 130,310",
      "185,310 185,400 170,520 130,640 100,765 130,870 170,1000 145,1060 150,1150",
      "130,370 140,455 170,510",
      "185,390 140,460 105,515 60,540 0,660",
      "0,540 60,540",
      "0,555 40,590 100,630 130,640 200,680 375,662 400,682 432,690 480,668 550,665 580,645 670,648 730,640 790,608 850,568 880,540 915,450",
      "0,725 100,765",
      "250,1150 405,1125 420,1140 540,1118 605,1128 650,1150",
      "760,415 795,490 798,525 850,568 885,578 1005,555 1230,620",
      "780,530 780,590 800,645 940,720 1020,750 1090,830 1150,870 1310,900 1315,910",
      "240,310 300,310",
    ],
    motorway: [],
  },
];

// Layers run bottom to top; the casing darkens the ground round the big roads.
const areaLayers = [
  ["wood", "#0c6160"],
  ["olive", "#3a6d5b"],
  ["teal", "#1a6960"],
  ["park", "#045f5a"],
  ["land", "#36485e"],
  ["water", "#1f3888"],
];
const lineLayers = [
  ["river", "#22398a", 4],
  ["thames", "#1f3888", 17],
  ["minor", "#5f6e87", 4],
  ["mid", "#687792", 7],
  ["major", "#2b3a50", 17],
  ["major", "#7788a4", 10],
  ["motorway", "#2a3b5c", 19],
  ["motorway", "#7199df", 12],
];

const shields = [
  { text: "M1", x: 290, y: 214, width: 37, motorway: true },
  { text: "A406", x: 478, y: 202, width: 49 },
  { text: "A40", x: 38, y: 350, width: 41 },
  { text: "M4", x: 111, y: 482, width: 39, motorway: true },
  { text: "A3", x: 255, y: 718, width: 35 },
  { text: "A2", x: 846, y: 582, width: 35 },
];

const stats = [
  { value: "0 m", label: "Distance", note: "current session", iconHeight: 48 },
  { value: "00:00", label: "Time", note: "paused", iconHeight: 46 },
  { value: "2.5", label: "Speed", note: "km/h", icon: SpeedIcon, iconHeight: 48 },
  { value: "0", label: "Steps", note: "current session", icon: StepsIcon, iconHeight: 54 },
  { value: "0", label: "Sats", note: "earned", iconHeight: 46 },
  { value: "98", label: "Heart", note: "bpm", iconHeight: 42 },
];

const tabs = [
  { label: "Home", icon: HomeIcon },
  { label: "Activity", icon: ActivityIcon, active: true },
  { label: "Map", icon: MapIcon },
  { label: "Rewards", icon: RewardsIcon },
  { label: "More", icon: MoreIcon },
];

function SpeedIcon() {
  return (
    <svg width="48" height="48" viewBox="0 0 48 48" fill="#30d158">
      <circle cx="25" cy="24" r="20" fill="none" stroke="#30d158" strokeWidth="3" />
      <circle cx="25" cy="12" r="2" />
      <circle cx="16.500" cy="15.500" r="2" />
      <circle cx="13" cy="24" r="2" />
      <circle cx="37" cy="24" r="2" />
      <circle cx="16.500" cy="32.500" r="2" />
      <circle cx="33.500" cy="32.500" r="2" />
      <path d="M34.500 14.500c.6.6.5 1.300.2 1.800L27 26.600a3.400 3.400 0 1 1-5-4.600l10.600-7.500c.6-.4 1.400-.5 1.900 0z" />
    </svg>
  );
}

function StepsIcon() {
  return (
    <svg width="48" height="54" viewBox="0 0 48 54" fill="#00dcc4">
      <path d="M13 3c5 0 8.500 5 8.500 12 0 4-1 8-2.500 12H7.500C6 23 4.500 19 4.500 15 4.500 8 8 3 13 3z" />
      <path d="M8 30h10v3c0 4-2 6-5 6s-5-2-5-6z" />
      <path d="M38 16.500c-6-1-11 4-12.500 12-.4 3-.4 6-.1 9l11.100 3.800c2.500-3 5-6.500 6-11C44 23 42.500 17.500 38 16.500z" />
      <path d="M24.500 40l9.500 3.400-.8 2.400c-1.400 4-4 5.700-6.800 4.700s-3.700-3.700-2.700-7.500z" />
    </svg>
  );
}

function HomeIcon() {
  return (
    <svg width="60" height="52" viewBox="0 0 60 52" fill="#f4f4f5">
      <path d="M45 6.500q0-1.500 1.500-1.500h3q1.500 0 1.500 1.500V19l-6-5z" />
      <path d="M3 24.500 29 2.400q1.300-1 2.600 0L57 24.500" fill="none" stroke="#f4f4f5" strokeWidth="4" strokeLinecap="round" />
      <path d="M30 8.500 52 27v21q0 3-3 3H12q-3 0-3-3V27zM24 31v16h13V31z" fillRule="evenodd" />
    </svg>
  );
}

function ActivityIcon() {
  return (
    <svg width="52" height="52" viewBox="0 0 52 52">
      <circle cx="26" cy="26" r="17.500" fill="none" stroke="#20bcc2" strokeWidth="15" />
    </svg>
  );
}

function MapIcon() {
  return (
    <svg width="52" height="52" viewBox="0 0 52 52" fill="#f4f4f5">
      <path d="M0 12.500q0-2 1.500-2.800L15 2.500v38L2 49q-2 1-2-1.500z" />
      <path d="M18 2.500 32 10v38.500l-14-8z" />
      <path d="M35 10 48 3q2-1 2 1.500v36q0 1.500-1.500 2.300L35 49z" />
    </svg>
  );
}

function RewardsIcon() {
  return (
    <svg width="52" height="52" viewBox="0 0 52 52">
      <circle cx="26" cy="26" r="25" fill="#f4f4f5" />
      <g fill="none" stroke="#1c1c1d" strokeWidth="3" strokeLinejoin="round">
        <path d="M20 15v22h8.500q5.500 0 5.500-5.500T28.500 26H20m0-11h7.500q5 0 5 5.500t-5 5.500" />
        <path d="M23.500 12v3m4.500-3v3m-4.500 22v3m4.500-3v3" strokeWidth="2" />
      </g>
    </svg>
  );
}

function MoreIcon() {
  return (
    <svg width="52" height="52" viewBox="0 0 52 52" fill="#f4f4f5">
      <circle cx="8" cy="26" r="5" />
      <circle cx="26" cy="26" r="5" />
      <circle cx="44" cy="26" r="5" />
    </svg>
  );
}

function PlaneIcon() {
  return (
    <svg width="22" height="22" viewBox="0 0 66 66" fill="#12233d">
      <path d="M63 3c-3-3-8-1-12 3L40 17 11 9l-6 5 25 14-13 13-10-1-4 4 14 6 6 14 4-4-1-10 13-13 13 25 6-6-8-29 11-11c4-4 5-10 2-13z" />
    </svg>
  );
}

function StatusBar() {
  return (
    <StatusRow>
      <div>
        <Clock>
          14:17
          <svg width="30" height="30" viewBox="0 0 30 30">
            <path d="M3 13 26 2q2-.5 2 1.500L17.500 27q-1.500 2.500-3 .2V16L3 15.500q-2.500-.8 0-2.500z" fill="#fff" stroke="#fff" strokeWidth="2" strokeLinejoin="round" />
          </svg>
        </Clock>
        <BackLink href="#back">
          <svg width="15" height="15" viewBox="0 0 15 15" fill="#fff">
            <path d="M1.200 6.200 13 .3q2-.6 2 1.300v12q0 1.900-2 1.200L1.200 8.800q-1.800-1.300 0-2.600z" />
          </svg>
          308sniper
        </BackLink>
      </div>
      <Signals>
        <svg width="48" height="32" viewBox="0 0 48 32" fill="#fff">
          <rect x="0" y="19" width="8" height="12" rx="2.500" />
          <rect x="13" y="14" width="8" height="17" rx="2.500" />
          <rect x="26" y="8" width="8" height="23" rx="2.500" fill="#3e4040" />
          <rect x="39" y="1" width="8" height="30" rx="2.500" fill="#3e4040" />
        </svg>
        <svg width="42" height="32" viewBox="0 0 42 32" fill="none" stroke="#fff" strokeWidth="6">
          <path d="M2.500 11.500a26.500 26.500 0 0 1 37 0" />
          <path d="M9.500 19a16.500 16.500 0 0 1 23 0" />
          <path d="M14.800 24.600a9 9 0 0 1 12.400 0L21 31z" fill="#fff" stroke="none" />
        </svg>
        <Battery>
          <BatteryCell>
            70
            <svg width="15" height="22" viewBox="0 0 15 22" fill="#fff">
              <path d="M9.500.5 1 11.500q-.8 1.200.6 1.200h4.200l-2 8.300q0 1 1 .2L14 9.800q.6-1.200-.6-1.200H9.200L10.800 1q-.1-1.200-1.300-.5z" />
            </svg>
          </BatteryCell>
          <BatteryNub />
        </Battery>
      </Signals>
    </StatusRow>
  );
}

function Logo() {
  return (
    <LogoBox>
      <svg width="76" height="76" viewBox="0 0 228 228">
        <g fill="none" strokeWidth="11">
          <path d="M128 9A107 107 0 0 0 48 202" stroke="#fdb50c" />
          <path d="M142 12a107 107 0 0 1 26 200" stroke="#039fa4" />
        </g>
        <circle cx="127" cy="53" r="15" fill="#039fa4" />
        <g fill="none" stroke="#039fa4" strokeWidth="13" strokeLinecap="round" strokeLinejoin="round">
          <path d="M117 80 87 96 74 128M128 93l12 20 21 13" />
          <path d="M117 87l-5 52" strokeWidth="27" />
          <path d="M112 145l27 26 9 42" strokeWidth="15" />
          <path d="M94 158 85 182 64 213" />
        </g>
      </svg>
      <LogoName>
        nine<span>10</span>
      </LogoName>
      <LogoTag>WALKS</LogoTag>
    </LogoBox>
  );
}

function LondonMap() {
  return (
    <MapCard>
      <svg viewBox="0 0 874 771" width="100%" height="100%" preserveAspectRatio="xMinYMin slice">
        <rect width="874" height="771" fill="#36485e" />
        {areaLayers.map(([layer, color]) =>
          tiles.map((tile) => (
            <g key={layer + tile.x + tile.y} transform={`translate(${tile.x} ${tile.y}) scale(0.33333)`} fill={color}>
              {tile[layer].map((points) => (
                <polygon key={points} points={points} />
              ))}
            </g>
          ))
        )}
        {lineLayers.map(([layer, color, width]) =>
          tiles.map((tile) => (
            <g
              key={layer + width + tile.x + tile.y}
              transform={`translate(${tile.x} ${tile.y}) scale(0.33333)`}
              fill="none"
              stroke={color}
              strokeWidth={width}
              strokeLinejoin="round"
            >
              {(tile[layer] || []).map((points) => (
                <polyline key={points} points={points} />
              ))}
            </g>
          ))
        )}
        <circle cx="77" cy="107" r="5" fill="#17171c" stroke="#dfe5ef" strokeWidth="1.500" />
        <circle cx="735" cy="139" r="4" fill="#17171c" stroke="#dfe5ef" strokeWidth="1.500" />
      </svg>
      <Place x={86} y={77} size={29}>Watford</Place>
      <Place x={741} y={116} size={23} weight={600}>Loughton</Place>
      <Place x={455} y={441} size={47}>London</Place>
      <Place x={-2} y={587} size={29}>ede</Place>
      <AirportPin x={712} y={449}>
        <PlaneIcon />
      </AirportPin>
      <AirportPin x={-20} y={525}>
        <PlaneIcon />
      </AirportPin>
      <AirportName x={660} y={489} centered>
        London City
        <br />
        Airport (LCY)
      </AirportName>
      <AirportName x={21} y={520}>
        Heathrow
        <br />
        Airport (LHR)
      </AirportName>
      {shields.map((shield) => (
        <Shield key={shield.text} x={shield.x} y={shield.y} $width={shield.width} $motorway={shield.motorway}>
          {shield.text}
        </Shield>
      ))}
      <Credits>
        <svg width="21" height="26" viewBox="0 0 63 78" fill="#fff">
          <path d="M44 1c1 8-6 17-15 17-1-8 6-15 15-17zM31 23c4 0 8-4 15-4 6 0 11 3 14 8-12 7-10 23 3 28-4 10-10 20-17 20-5 0-7-3-13-3s-8 3-13 3C10 75 1 58 1 44c0-16 9-24 18-24 5 0 9 3 12 3z" />
        </svg>
        <span>Maps</span>
        <a href="#legal">Legal</a>
      </Credits>
      <LocateButton aria-label="Centre on my location">
        <svg width="40" height="40" viewBox="0 0 120 120" fill="none" stroke="#05a0a6" strokeWidth="10" strokeLinejoin="round">
          <path d="M10 60q-5-4 1-7L102 12q7 0 6 7L69 111q-5 5-8 0V62z" />
        </svg>
      </LocateButton>
    </MapCard>
  );
}

function GlassReflections() {
  return (
    <Reflections viewBox="0 0 852 133" preserveAspectRatio="xMinYMid slice">
      <defs>
        <filter id="soft">
          <feGaussianBlur stdDeviation="1.500" />
        </filter>
      </defs>
      <g filter="url(#soft)">
        <path d="M8 38q4 22 18 28c10-7 27-8 35 0 9 9 8 23-3 32-6 6 0 20 12 27-27 6-48-7-59-28S0 62 8 38z" fill="#3b2d02" />
        <path d="M10 80q5 20 23 31M18 91l8 17M22 93l9 8M39 74v22M45 74v22M37 77h9c7 0 7 8 0 8h-7m7 0c8 0 8 9 0 9h-9" fill="none" stroke="#241d05" strokeWidth="2" />
        <path d="M490 101c-8-7-22-16-22-28 0-12 15-14 22-5 7-9 22-7 22 5 0 12-14 21-22 28z" fill="#5a1415" />
        <path d="M469 2h42q-20 5-42 0zM468 129l22-11 22 11z" fill="#6b1719" />
        <path d="M417 0v133M433 0v133" stroke="#087074" strokeWidth="4" opacity=".35" />
      </g>
    </Reflections>
  );
}

export default function App() {
  const list = useRef(null);

  useLayoutEffect(() => {
    list.current.scrollTop = 107;
  }, []);

  return (
    <Screen>
      <GlobalStyle />
      <StatusBar />
      <Title>Activity</Title>
      <Header>
        <Logo />
        <ReadyPill>
          <svg width="26" height="42" viewBox="0 0 78 126" fill="none" stroke="#05a0a6" strokeWidth="9" strokeLinecap="round" strokeLinejoin="round">
            <circle cx="39" cy="13" r="12" fill="#05a0a6" stroke="none" />
            <path d="M29 38 12 47 8 68M52 46l5 9h16" />
            <path d="M36 42v30" strokeWidth="22" />
            <path d="M33 77l13 16 12 25" strokeWidth="11" />
            <path d="M24 86 21 98 6 117" strokeWidth="10" />
          </svg>
          Ready
        </ReadyPill>
      </Header>
      <LondonMap />
      <StatsList ref={list}>
        <StatsGrid>
          {stats.map(({ icon: Icon, ...stat }) => (
            <StatCard key={stat.label}>
              <IconSlot height={stat.iconHeight}>{Icon && <Icon />}</IconSlot>
              <Value>{stat.value}</Value>
              <Label>{stat.label}</Label>
              <Note>{stat.note}</Note>
            </StatCard>
          ))}
        </StatsGrid>
      </StatsList>
      <Fade />
      <TabBar>
        <GlassReflections />
        {tabs.map(({ label, icon: Icon, active }) => (
          <Tab key={label} $active={active}>
            <Icon />
            <span>{label}</span>
          </Tab>
        ))}
      </TabBar>
    </Screen>
  );
}

const GlobalStyle = createGlobalStyle`
  * {
    box-sizing: border-box;
  }
  body {
    margin: 0;
    background: #000;
    color: #fff;
    font-family: Inter, "Liberation Sans", sans-serif;
  }
  svg {
    display: block;
    flex-shrink: 0;
  }
`;

const Screen = styled.main`
  display: flex;
  flex-direction: column;
  position: relative;
  height: 100vh;
  overflow: hidden;
  background: linear-gradient(155deg, #000b0d 0%, #090d0b 18%, #100d06 36%, #130c00 48%, #000 68%);
`;

const StatusRow = styled.header`
  display: flex;
  justify-content: space-between;
  align-items: flex-start;
  padding: 32px 87px 0 27px;
`;

const Clock = styled.div`
  display: flex;
  align-items: center;
  gap: 9px;
  margin-left: 84px;
  font-size: 39px;
  font-weight: 600;
  line-height: 44px;
`;

const BackLink = styled.a`
  display: flex;
  align-items: center;
  gap: 9px;
  color: #fff;
  font-size: 24px;
  font-weight: 500;
  line-height: 36px;
  text-decoration: none;
`;

const Signals = styled.div`
  display: flex;
  align-items: center;
  gap: 15px;
  margin-top: 21px;
`;

const Battery = styled.div`
  display: flex;
  align-items: center;
  gap: 2px;
`;

const BatteryCell = styled.div`
  display: flex;
  align-items: center;
  justify-content: center;
  width: 61px;
  height: 32px;
  border-radius: 10px;
  background: linear-gradient(90deg, #34c759 70%, #555 70%);
  font-size: 27px;
  font-weight: 700;
`;

const BatteryNub = styled.div`
  width: 4px;
  height: 11px;
  border-radius: 0 4px 4px 0;
  background: #4a4a4a;
`;

const Title = styled.h1`
  margin: 46px 0 0;
  font-size: 35px;
  font-weight: 600;
  line-height: 46px;
  text-align: center;
`;

const Header = styled.div`
  display: flex;
  align-items: flex-end;
  justify-content: space-between;
  margin: 103px 34px 0 69px;
  padding-bottom: 68px;
`;

const LogoBox = styled.div`
  display: flex;
  flex-direction: column;
  align-items: center;
  width: 106px;
`;

const LogoName = styled.div`
  color: #039fa4;
  font-size: 35px;
  font-weight: 500;
  line-height: 32px;
  span {
    color: #fdb50c;
  }
`;

const LogoTag = styled.div`
  display: flex;
  align-items: center;
  justify-content: space-between;
  width: 100%;
  color: #039fa4;
  font-size: 9px;
  font-weight: 700;
  letter-spacing: 6px;
  line-height: 10px;
  &::before,
  &::after {
    content: "";
    width: 17px;
    height: 1px;
    background: #fdb50c;
  }
`;

const ReadyPill = styled.div`
  display: flex;
  align-items: center;
  gap: 18px;
  height: 81px;
  margin-bottom: 14px;
  padding: 0 26px 0 30px;
  border-radius: 41px;
  background: #262623;
  color: #f5f5f5;
  font-size: 31px;
  font-weight: 600;
`;

const MapCard = styled.section`
  position: relative;
  flex-shrink: 0;
  height: 771px;
  margin: 0 34px;
  border-radius: 18px;
  overflow: hidden;
  background: #36485e;
`;

const Pinned = styled.div`
  position: absolute;
  left: ${({ x }) => x}px;
  top: ${({ y }) => y}px;
  white-space: nowrap;
`;

const Place = styled(Pinned)`
  color: #dde4ef;
  font-size: ${({ size }) => size}px;
  font-weight: ${({ weight }) => weight || 700};
  line-height: 1.25;
  text-shadow: 0 0 4px #26354a, 0 1px 3px #26354a;
`;

const AirportName = styled(Pinned)`
  color: #6aabf7;
  font-size: 21px;
  font-weight: 600;
  line-height: 23px;
  text-align: ${({ centered }) => (centered ? "center" : "left")};
  text-shadow: 0 0 3px #16243a, 0 0 5px #16243a, 0 2px 8px #16243a;
`;

const AirportPin = styled(Pinned)`
  display: flex;
  align-items: center;
  justify-content: center;
  width: 35px;
  height: 35px;
  border-radius: 8px;
  background: linear-gradient(#67abfb, #2560c8);
  box-shadow: 0 0 0 2px #22314a;
`;

const Shield = styled(Pinned)`
  width: ${({ $width }) => $width}px;
  height: 29px;
  border: 2px solid #d5dbd9;
  border-radius: 5px;
  background: ${({ $motorway }) => ($motorway ? "#1764d2" : "#2c6a45")};
  box-shadow: 0 0 0 2px ${({ $motorway }) => ($motorway ? "#1764d2" : "#2c6a45")};
  color: ${({ $motorway }) => ($motorway ? "#e4e6ea" : "#d0a911")};
  font-family: "Liberation Sans Narrow", Roboto, sans-serif;
  font-size: 17px;
  font-weight: 700;
  line-height: 25px;
  text-align: center;
`;

const Credits = styled.div`
  position: absolute;
  left: 23px;
  bottom: 14px;
  display: flex;
  align-items: center;
  gap: 4px;
  font-size: 32px;
  line-height: 40px;
  a {
    margin-left: 16px;
    color: #a2a9b3;
    font-size: 19px;
    font-weight: 500;
  }
`;

const LocateButton = styled.button`
  position: absolute;
  top: 35px;
  right: 35px;
  display: flex;
  align-items: center;
  justify-content: center;
  width: 92px;
  height: 92px;
  border: 1px solid #1b8583;
  border-radius: 50%;
  background: radial-gradient(circle at 50% 40%, rgba(25, 66, 70, 0.96) 40%, rgba(22, 58, 58, 0.96));
`;

const StatsList = styled.section`
  flex: 1;
  min-height: 0;
  padding: 0 33px;
  overflow-y: auto;
  scrollbar-width: none;
`;

const StatsGrid = styled.div`
  display: grid;
  grid-template-columns: 1fr 1fr;
  gap: 24px 14px;
  padding-bottom: 180px;
`;

const StatCard = styled.article`
  display: flex;
  flex-direction: column;
  justify-content: center;
  min-height: 336px;
  padding: 2px 28px 0;
  border: 3px solid #009ca1;
  border-radius: 20px;
  background: #1c1c1e;
`;

const IconSlot = styled.div`
  height: ${({ height }) => height}px;
  margin-bottom: 26px;
`;

const Value = styled.strong`
  margin-bottom: 24px;
  font-size: 46px;
  font-weight: 700;
  line-height: 58px;
`;

const Label = styled.h2`
  margin: 0 0 2px;
  font-size: 35px;
  font-weight: 600;
  line-height: 44px;
`;

const Note = styled.span`
  color: #8e8e93;
  font-size: 26px;
  line-height: 34px;
`;

const Fade = styled.div`
  position: absolute;
  inset: auto 0 0;
  height: 290px;
  background: linear-gradient(transparent, rgba(0, 0, 0, 0.2) 32%, rgba(0, 0, 0, 0.35) 46%, rgba(0, 0, 0, 0.8) 75%, rgba(0, 0, 0, 0.87));
  pointer-events: none;
`;

const TabBar = styled.nav`
  position: absolute;
  inset: auto 45px 45px;
  display: flex;
  height: 133px;
  padding: 9px 17px;
  border: 1px solid #454747;
  border-radius: 67px;
  background: #1c1c1d;
  overflow: hidden;
`;

const Reflections = styled.svg`
  position: absolute;
  inset: 0;
  width: 100%;
  height: 100%;
`;

const Tab = styled.button`
  position: relative;
  display: flex;
  flex: 1 1 0;
  flex-direction: column;
  align-items: center;
  gap: 6px;
  margin: 0 -9px;
  padding: 16px 0 0;
  border: none;
  border-radius: 57px;
  background: ${({ $active }) => ($active ? "#3d3d3e" : "transparent")};
  color: ${({ $active }) => ($active ? "#20bcc2" : "#f4f4f5")};
  font: inherit;
  font-size: 22px;
  font-weight: 500;
  line-height: 26px;
`;
